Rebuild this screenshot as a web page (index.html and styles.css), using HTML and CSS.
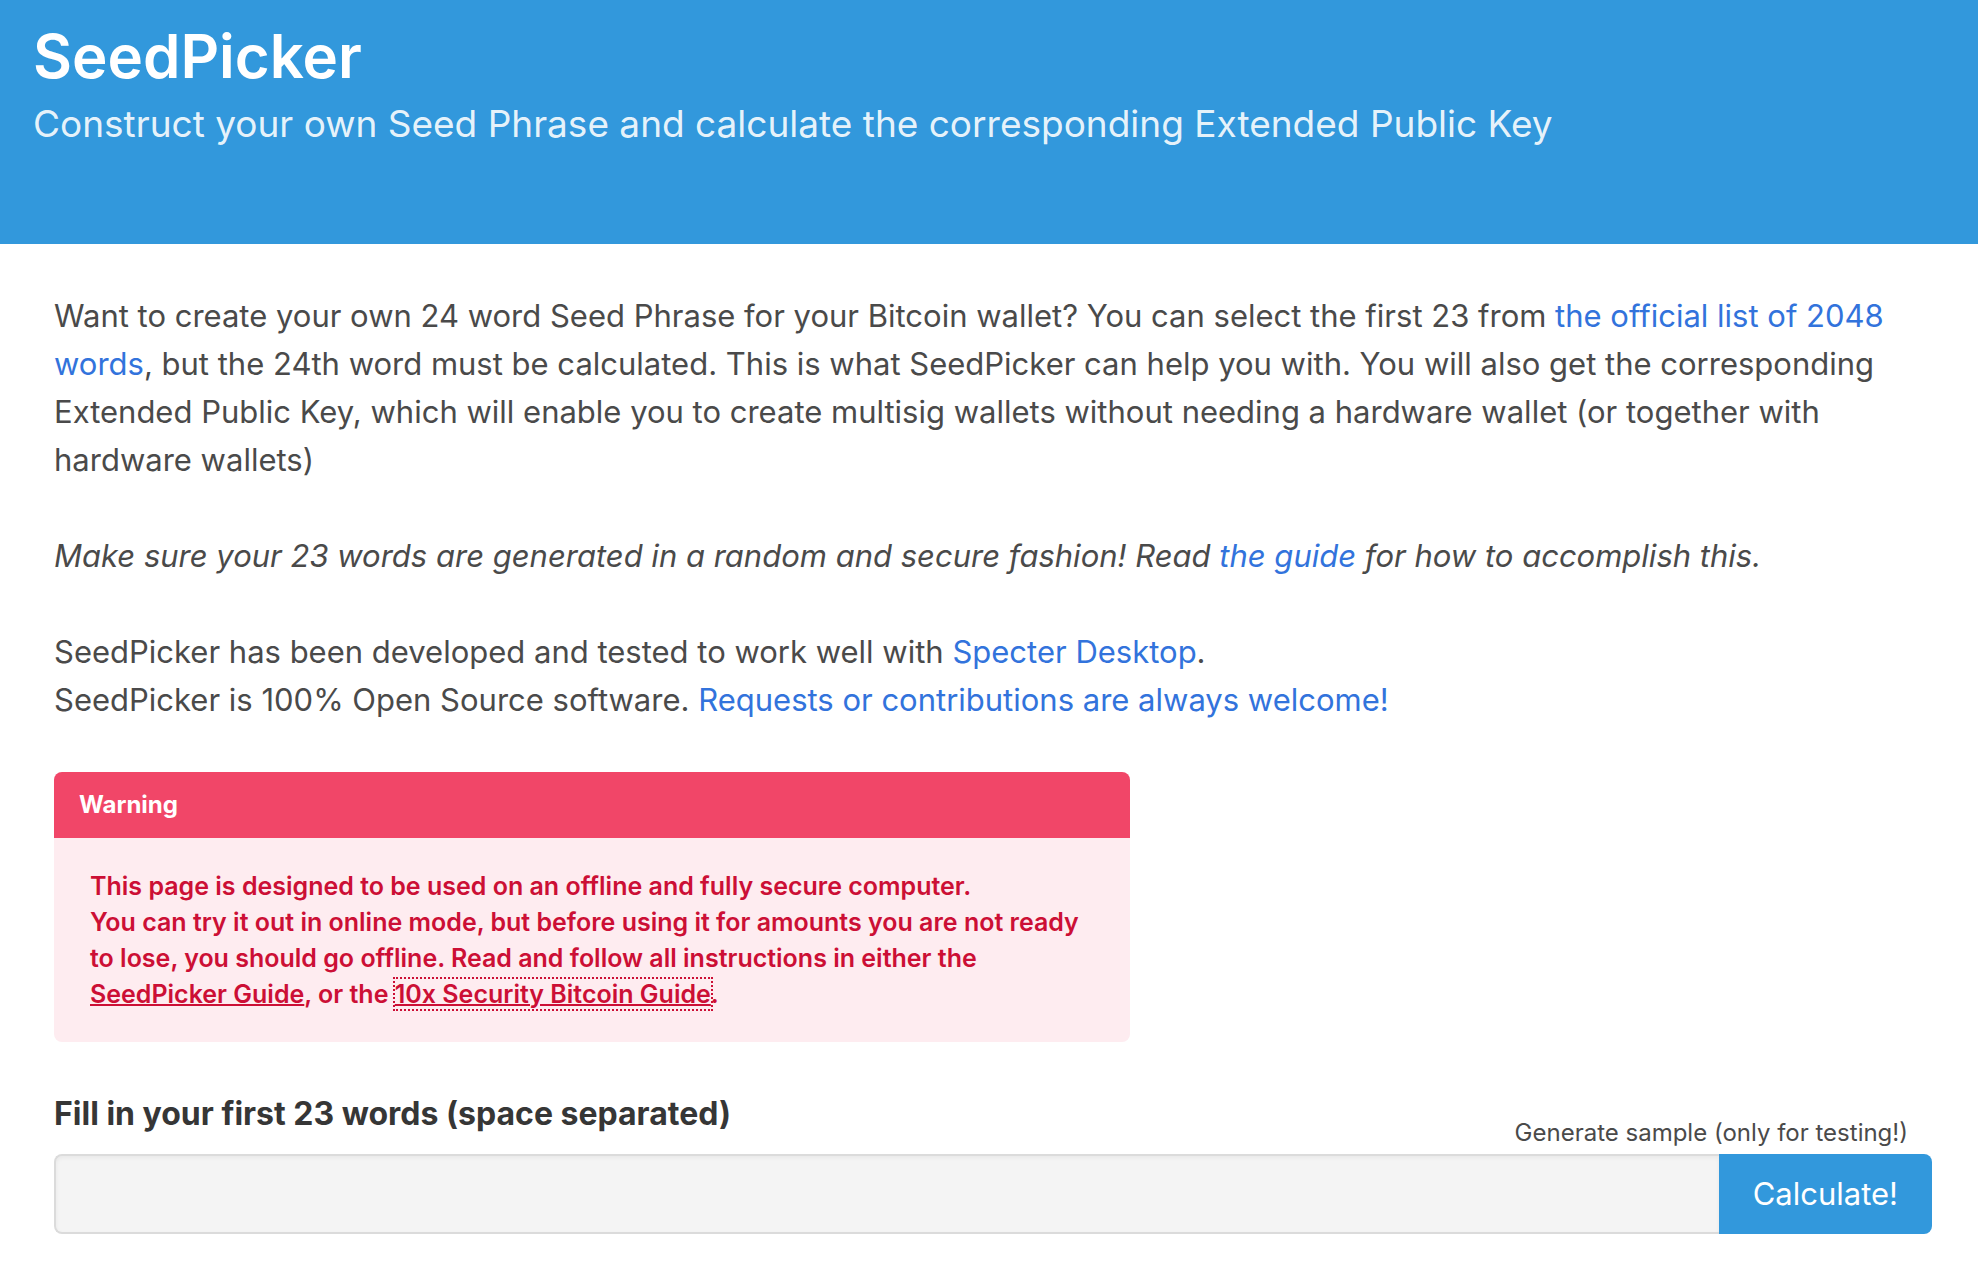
FILE: index.html
```html
<!DOCTYPE html>
<html lang="en">
<head>
<meta charset="utf-8">
<title>SeedPicker</title>
<link rel="stylesheet" href="styles.css">
</head>
<body>
<header class="hero">
  <h1 class="title">SeedPicker</h1>
  <p class="subtitle">Construct your own Seed Phrase and calculate the corresponding Extended Public Key</p>
</header>
<main class="content">
  <p class="text">Want to create your own 24 word Seed Phrase for your Bitcoin wallet? You can select the first 23 from <a href="#">the official list of 2048 words</a>, but the 24th word must be calculated. This is what SeedPicker can help you with. You will also get the corresponding Extended Public Key, which will enable you to create multisig wallets without needing a hardware wallet (or together with hardware wallets)</p>
  <p class="text"><em>Make sure your 23 words are generated in a random and secure fashion! Read <a href="#">the guide</a> for how to accomplish this.</em></p>
  <p class="text">SeedPicker has been developed and tested to work well with <a href="#">Specter Desktop</a>.<br>SeedPicker is 100% Open Source software. <a href="#">Requests or contributions are always welcome!</a></p>
  <article class="message">
    <div class="message-header">Warning</div>
    <div class="message-body">This page is designed to be used on an offline and fully secure computer.<br>You can try it out in online mode, but before using it for amounts you are not ready to lose, you should go offline. Read and follow all instructions in either the <a href="#">SeedPicker Guide</a>, or the <a class="focused" href="#">10x Security Bitcoin Guide</a>.</div>
  </article>
  <form class="form">
    <div class="form-head">
      <label class="label" for="words">Fill in your first 23 words (space separated)</label>
      <button class="sample" type="button">Generate sample (only for testing!)</button>
    </div>
    <div class="field">
      <input class="input" id="words" type="text">
      <button class="submit" type="button">Calculate!</button>
    </div>
  </form>
</main>
</body>
</html>
```
FILE: styles.css
```css
* { box-sizing: border-box; margin: 0; padding: 0; }
body { background: #fff; color: #4a4a4a; font-family: Inter, "Liberation Sans", sans-serif; font-size: 31px; line-height: 48px; }
a { color: #3273dc; text-decoration: none; }
.hero { background: #3298dc; color: #fff; padding: 20px 33px 96px; }
.title { font-size: 60px; font-weight: 600; line-height: 72px; }
.subtitle { font-size: 37px; line-height: 48px; padding-top: 8px; color: rgba(255, 255, 255, 0.9); }
.content { padding: 48px 46px 38px 54px; }
.text { margin-bottom: 48px; }
.message { width: 1076px; max-width: 100%; border-radius: 8px; overflow: hidden; background: #feecf0; color: #cc0f35; font-size: 25px; font-weight: 600; line-height: 36px; }
.message-header { background: #f14668; color: #fff; font-size: 24px; font-weight: 700; padding: 15px 25px; }
.message-body { padding: 30px 36px; }
.message-body a { color: inherit; text-decoration: underline; text-decoration-thickness: 2px; }
.message-body .focused { outline: 2px dotted #cc0f35; }
.form { padding-top: 48px; }
.form-head { display: flex; justify-content: space-between; align-items: flex-end; padding-right: 24px; }
.label { color: #363636; font-size: 32px; font-weight: 700; padding-bottom: 16px; }
.sample { border: 0; background: none; color: inherit; font: inherit; font-size: 24px; line-height: 42px; }
.field { display: flex; }
.input { flex: 1; min-width: 0; height: 80px; border: 2px solid #dbdbdb; border-right: 0; border-radius: 8px 0 0 8px; background: #f4f4f4; box-shadow: inset 0 2px 4px rgba(10, 10, 10, 0.05); color: #363636; font: inherit; padding: 0 20px; }
.submit { border: 0; border-radius: 0 8px 8px 0; background: #3298dc; color: #fff; font: inherit; padding: 0 34px; }
```
